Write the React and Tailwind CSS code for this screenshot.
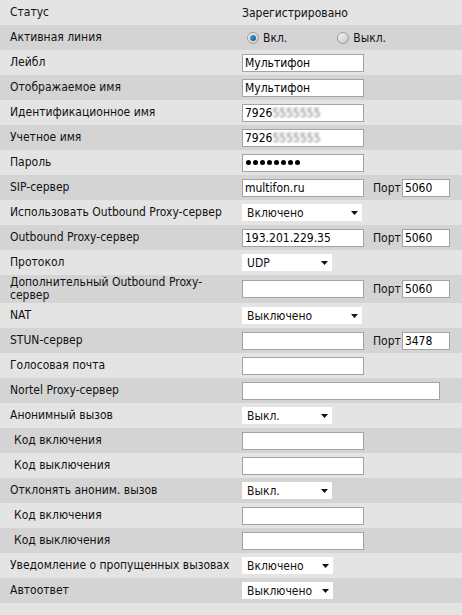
import React from 'react';

const font = "font-['DejaVu_Sans_Condensed','DejaVu_Sans',sans-serif] font-stretch-condensed";

function Row({ label, dark, indent, tall, children }) {
    return (
        <div className={`flex items-center ${tall ? 'h-[28px]' : 'h-[25px]'} ${dark ? 'bg-[#d4d4d4]' : 'bg-[#e4e4e4]'}`}>
            <div className={`w-[242px] shrink-0 leading-[13px] ${indent ? 'pl-[14px]' : 'pl-[10px]'}`}>{label}</div>
            <div className="flex items-center">{children}</div>
        </div>
    );
}

function Field({ value = '', w = 'w-[122px]' }) {
    return (
        <input
            readOnly
            type="text"
            value={value}
            className={`${w} h-[18px] bg-white border border-[#a3a3a3] px-[2px] text-[12px] text-black outline-none ${font}`}
        />
    );
}

function Masked({ prefix }) {
    return (
        <div className="w-[122px] h-[18px] bg-white border border-[#a3a3a3] px-[2px] flex items-center text-[12px] text-black overflow-hidden">
            <span>{prefix}</span>
            <span className="text-[#7a7a7a] blur-[1px]">5555555</span>
        </div>
    );
}

function Password({ length }) {
    return (
        <div className="w-[122px] h-[18px] bg-white border border-[#a3a3a3] pl-[3px] flex items-center gap-[2px]">
            {Array.from({ length }).map((_, i) => (
                <span key={i} className="w-[5px] h-[5px] rounded-full bg-black" />
            ))}
        </div>
    );
}

function Port({ value }) {
    return (
        <>
            <span className="ml-[9px] mr-[1px]">Порт</span>
            <Field value={value} w="w-[48px]" />
        </>
    );
}

function Dropdown({ value, w = 'w-[120px]' }) {
    return (
        <div className={`${w} h-[17px] bg-white flex items-center justify-between pl-[5px] pr-[4px]`}>
            <span>{value}</span>
            <svg width="7" height="4" viewBox="0 0 7 4">
                <path d="M0 0 H7 L3.5 4 Z" fill="#111" />
            </svg>
        </div>
    );
}

function Radio({ checked, label }) {
    return (
        <span className="flex items-center gap-[4px]">
            <span className="w-[12px] h-[12px] rounded-full border border-[#9a9a9a] bg-gradient-to-br from-[#f4f4f4] to-[#c9c9c9] flex items-center justify-center">
                {checked && <span className="w-[6px] h-[6px] rounded-full bg-gradient-to-br from-[#4fa9e0] to-[#0d4f86]" />}
            </span>
            {label}
        </span>
    );
}

export default function App() {
    return (
        <div className={`min-h-screen bg-[#e4e4e4] text-[12px] text-[#111] ${font}`}>
            <Row label="Статус">
                <span>Зарегистрировано</span>
            </Row>
            <Row label="Активная линия" dark>
                <div className="flex items-center pl-[5px] gap-[50px]">
                    <Radio checked label="Вкл." />
                    <Radio label="Выкл." />
                </div>
            </Row>
            <Row label="Лейбл">
                <Field value="Мультифон" />
            </Row>
            <Row label="Отображаемое имя" dark>
                <Field value="Мультифон" />
            </Row>
            <Row label="Идентификационное имя">
                <Masked prefix="7926" />
            </Row>
            <Row label="Учетное имя" dark>
                <Masked prefix="7926" />
            </Row>
            <Row label="Пароль">
                <Password length={8} />
            </Row>
            <Row label="SIP-сервер" dark>
                <Field value="multifon.ru" />
                <Port value="5060" />
            </Row>
            <Row label="Использовать Outbound Proxy-сервер">
                <Dropdown value="Включено" />
            </Row>
            <Row label="Outbound Proxy-сервер" dark>
                <Field value="193.201.229.35" />
                <Port value="5060" />
            </Row>
            <Row label="Протокол">
                <Dropdown value="UDP" w="w-[90px]" />
            </Row>
            <Row label={<>Дополнительный Outbound Proxy-<br />сервер</>} dark tall>
                <Field />
                <Port value="5060" />
            </Row>
            <Row label="NAT">
                <Dropdown value="Выключено" />
            </Row>
            <Row label="STUN-сервер" dark>
                <Field />
                <Port value="3478" />
            </Row>
            <Row label="Голосовая почта">
                <Field />
            </Row>
            <Row label="Nortel Proxy-сервер" dark>
                <Field w="w-[198px]" />
            </Row>
            <Row label="Анонимный вызов">
                <Dropdown value="Выкл." w="w-[90px]" />
            </Row>
            <Row label="Код включения" dark indent>
                <Field />
            </Row>
            <Row label="Код выключения" indent>
                <Field />
            </Row>
            <Row label="Отклонять аноним. вызов" dark>
                <Dropdown value="Выкл." w="w-[90px]" />
            </Row>
            <Row label="Код включения" indent>
                <Field />
            </Row>
            <Row label="Код выключения" dark indent>
                <Field />
            </Row>
            <Row label="Уведомление о пропущенных вызовах">
                <Dropdown value="Включено" w="w-[91px]" />
            </Row>
            <Row label="Автоответ" dark>
                <Dropdown value="Выключено" w="w-[91px]" />
            </Row>
        </div>
    );
}
